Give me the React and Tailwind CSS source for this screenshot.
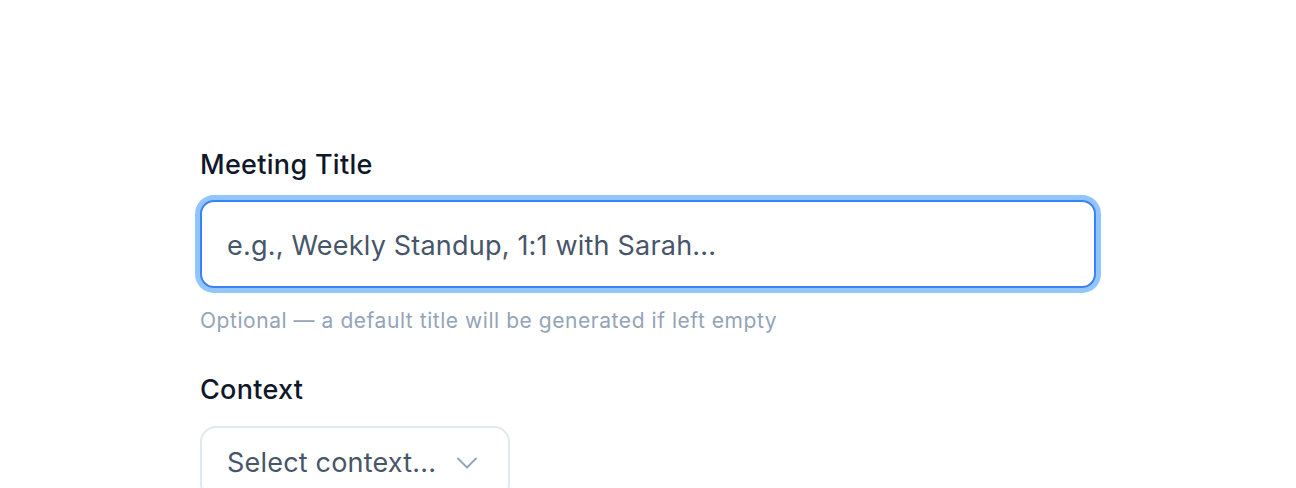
import { ChevronDown } from 'lucide-react';

export default function App() {
    return (
        <div className="min-h-screen bg-white" style={{ fontFamily: 'Inter, "Noto Sans", sans-serif' }}>
            <div className="pl-[200px] pt-[149px] w-[1096px] box-content">
                <label className="block text-[27px] leading-[32px] tracking-[0.3px] font-medium text-[#0f172a] mb-[19px]">
                    Meeting Title
                </label>
                <input
                    type="text"
                    placeholder="e.g., Weekly Standup, 1:1 with Sarah..."
                    className="w-[896px] h-[88px] px-[25px] pt-[3px] rounded-[14px] border-2 border-[#3b82f6] ring-[5px] ring-[#93c5fd] outline-none text-[27px] tracking-[0.2px] text-[#334155] placeholder:text-[#475569] bg-white"
                />
                <p className="mt-[19px] text-[21px] leading-[28px] tracking-[0.55px] text-[#94a3b8]">
                    Optional — a default title will be generated if left empty
                </p>

                <label className="block mt-[39px] text-[27px] leading-[32px] tracking-[0.3px] font-medium text-[#0f172a] mb-[20px]">
                    Context
                </label>
                <button className="w-[310px] h-[74px] pl-[25px] pr-[23px] rounded-[16px] border-2 border-[#e2e8f0] flex items-center justify-between bg-white">
                    <span className="text-[27px] tracking-[0.2px] text-[#475569]">Select context...</span>
                    <ChevronDown className="w-[36px] h-[36px] text-[#94a3b8]" strokeWidth={1.2} />
                </button>
            </div>
        </div>
    );
}
